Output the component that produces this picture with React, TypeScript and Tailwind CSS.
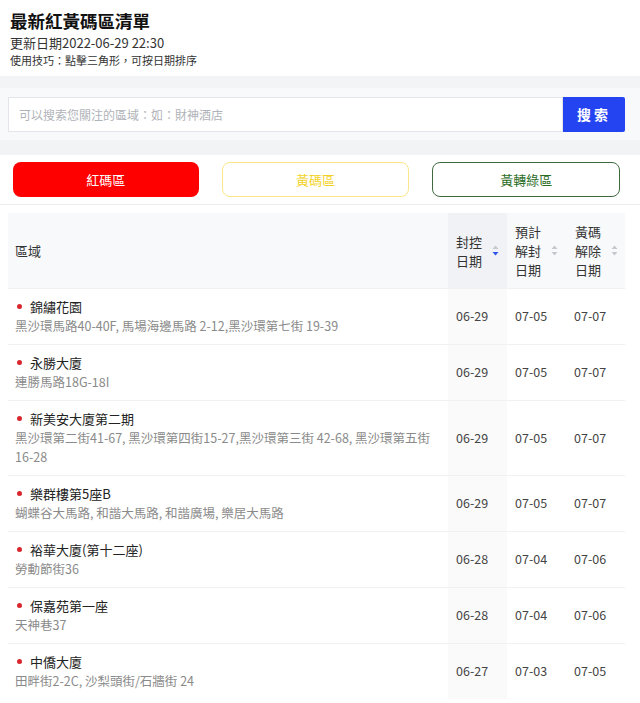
import React from 'react';

const font = { fontFamily: '"Noto Sans CJK TC", "Noto Sans", sans-serif' };

interface Row {
  name: string;
  addr: string;
  close: string;
  open: string;
  yellow: string;
}

const rows: Row[] = [
  { name: '錦繡花園', addr: '黑沙環馬路40-40F, 馬場海邊馬路 2-12,黑沙環第七街 19-39', close: '06-29', open: '07-05', yellow: '07-07' },
  { name: '永勝大廈', addr: '連勝馬路18G-18I', close: '06-29', open: '07-05', yellow: '07-07' },
  { name: '新美安大廈第二期', addr: '黑沙環第二街41-67, 黑沙環第四街15-27,黑沙環第三街 42-68, 黑沙環第五街 16-28', close: '06-29', open: '07-05', yellow: '07-07' },
  { name: '樂群樓第5座B', addr: '蝴蝶谷大馬路, 和諧大馬路, 和諧廣場, 樂居大馬路', close: '06-29', open: '07-05', yellow: '07-07' },
  { name: '裕華大廈(第十二座)', addr: '勞動節街36', close: '06-28', open: '07-04', yellow: '07-06' },
  { name: '保嘉苑第一座', addr: '天神巷37', close: '06-28', open: '07-04', yellow: '07-06' },
  { name: '中僑大廈', addr: '田畔街2-2C, 沙梨頭街/石牆街 24', close: '06-27', open: '07-03', yellow: '07-05' },
];

const SortIcon = ({ active }: { active?: boolean }) => (
  <svg width="7" height="11" viewBox="0 0 7 11" className="shrink-0">
    <path d="M3.5 0.5 L6.5 4 L0.5 4 Z" fill="#c5c8ce" />
    <path d="M3.5 10.5 L6.5 7 L0.5 7 Z" fill={active ? '#2f54eb' : '#c5c8ce'} />
  </svg>
);

const HeadCell = ({ lines, active }: { lines: string[]; active?: boolean }) => (
  <div className={`flex items-center gap-[10px] pl-2 w-full ${active ? 'bg-[#f1f2f5]' : ''}`}>
    <div className="text-[13px] leading-[19px] text-[#333]">
      {lines.map((l) => (
        <div key={l}>{l}</div>
      ))}
    </div>
    <SortIcon active={active} />
  </div>
);

export default function App() {
  return (
    <div className="w-[640px] h-[703px] overflow-hidden bg-white" style={font}>
      {/* Header */}
      <div className="h-[76px] px-[10px] pt-[9px] bg-white">
        <h1 className="text-[17.5px] leading-[24px] font-bold text-[#111]">最新紅黃碼區清單</h1>
        <p className="text-[13px] leading-[18px] text-[#333] mt-[1px]">更新日期2022-06-29 22:30</p>
        <p className="text-[11px] leading-[16px] text-[#333]">使用技巧：點擊三角形，可按日期排序</p>
      </div>
      <div className="h-[12px] bg-[#f3f4f6]" />

      {/* Search */}
      <div className="h-[52px] bg-[#f8f9fb] pl-[8px] pr-[15px] pt-[9px] flex">
        <div className="flex-1 h-[35px] bg-white border border-[#e3e5ea] flex items-center px-[10px] text-[12px] text-[#b0b3b9]">
          可以搜索您關注的區域：如：財神酒店
        </div>
        <button className="w-[62px] h-[35px] bg-[#2444f2] text-white text-[14px] font-bold tracking-[3px] rounded-r-[2px]">
          搜索
        </button>
      </div>
      <div className="h-[15px] bg-[#f2f3f5]" />

      {/* Filter buttons */}
      <div className="h-[50px] bg-white flex items-center gap-[23px] pl-[13px] pr-[20px] border-b border-[#ebedf0]">
        <button className="flex-1 h-[35px] rounded-[8px] bg-[#ff0000] text-white text-[13px]">紅碼區</button>
        <button className="flex-1 h-[35px] rounded-[8px] border border-[#fbe78a] bg-white text-[#f2d22a] text-[13px]">黃碼區</button>
        <button className="flex-1 h-[35px] rounded-[8px] border border-[#3f6a3f] bg-white text-[#2a6d1f] text-[13px]">黃轉綠區</button>
      </div>

      {/* Table */}
      <div className="pl-[8px] pr-[15px] pt-[8px]">
        <div className="grid grid-cols-[440px_59px_60px_58px]">
          <div className="bg-[#f8f9fb] h-[75px] flex items-center pl-[7px] text-[13px] text-[#333]">區域</div>
          <div className="bg-[#f8f9fb] flex"><HeadCell lines={['封控', '日期']} active /></div>
          <div className="bg-[#f8f9fb] flex"><HeadCell lines={['預計', '解封', '日期']} /></div>
          <div className="bg-[#f8f9fb] flex"><HeadCell lines={['黃碼', '解除', '日期']} /></div>

          {rows.map((r) => (
            <React.Fragment key={r.name}>
              <div className="border-t border-[#f0f1f3] pl-[7px] pr-[4px] pt-[8px] pb-[9px]">
                <div className="flex items-center text-[13px] leading-[19px] text-[#222]">
                  <span className="w-[5px] h-[5px] rounded-full bg-[#d9262c] ml-[2px] mr-[8px]" />
                  {r.name}
                </div>
                <div className="text-[12.5px] leading-[19px] text-[#8a8a8a]">{r.addr}</div>
              </div>
              <div className="border-t border-[#f0f1f3] bg-[#fafafb] flex items-center pl-[8px] text-[12.5px] text-[#444]">{r.close}</div>
              <div className="border-t border-[#f0f1f3] flex items-center pl-[8px] text-[12.5px] text-[#444]">{r.open}</div>
              <div className="border-t border-[#f0f1f3] flex items-center pl-[7px] text-[12.5px] text-[#444]">{r.yellow}</div>
            </React.Fragment>
          ))}
        </div>
      </div>
    </div>
  );
}
